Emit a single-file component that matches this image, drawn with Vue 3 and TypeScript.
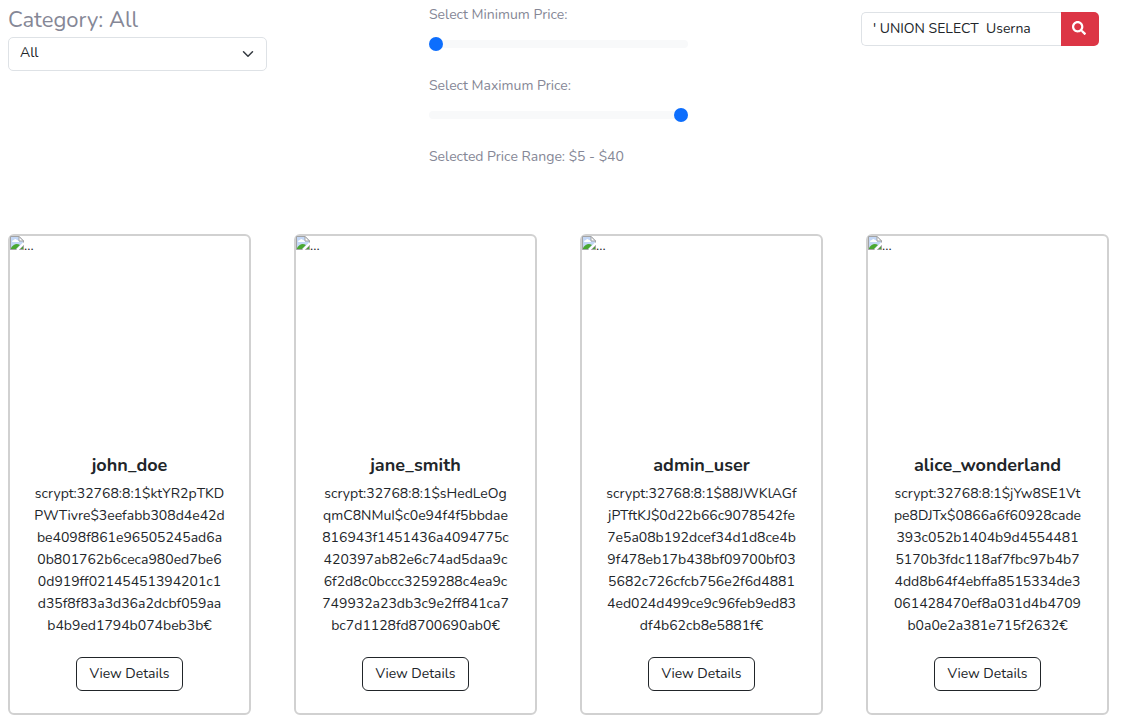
<script setup lang="ts">
import { computed, ref } from 'vue'

interface Product {
  name: string
  lines: string[]
}

const category = ref('All')
const minPrice = ref(5)
const maxPrice = ref(40)
const query = ref("' UNION SELECT  Userna")
const range = computed(() => `$${minPrice.value} - $${maxPrice.value}`)

const products: Product[] = [
  {
    name: 'john_doe',
    lines: [
      'scrypt:32768:8:1$ktYR2pTKD',
      'PWTivre$3eefabb308d4e42d',
      'be4098f861e96505245ad6a',
      '0b801762b6ceca980ed7be6',
      '0d919ff02145451394201c1',
      'd35f8f83a3d36a2dcbf059aa',
      'b4b9ed1794b074beb3b€',
    ],
  },
  {
    name: 'jane_smith',
    lines: [
      'scrypt:32768:8:1$sHedLeOg',
      'qmC8NMuI$c0e94f4f5bbdae',
      '816943f1451436a4094775c',
      '420397ab82e6c74ad5daa9c',
      '6f2d8c0bccc3259288c4ea9c',
      '749932a23db3c9e2ff841ca7',
      'bc7d1128fd8700690ab0€',
    ],
  },
  {
    name: 'admin_user',
    lines: [
      'scrypt:32768:8:1$88JWKlAGf',
      'jPTftKJ$0d22b66c9078542fe',
      '7e5a08b192dcef34d1d8ce4b',
      '9f478eb17b438bf09700bf03',
      '5682c726cfcb756e2f6d4881',
      '4ed024d499ce9c96feb9ed83',
      'df4b62cb8e5881f€',
    ],
  },
  {
    name: 'alice_wonderland',
    lines: [
      'scrypt:32768:8:1$jYw8SE1Vt',
      'pe8DJTx$0866a6f60928cade',
      '393c052b1404b9d4554481',
      '5170b3fdc118af7fbc97b4b7',
      '4dd8b64f4ebffa8515334de3',
      '061428470ef8a031d4b4709',
      'b0a0e2a381e715f2632€',
    ],
  },
]
</script>

<template>
  <main class="page">
    <section class="filters">
      <div>
        <label class="heading" for="category">Category: {{ category }}</label>
        <div class="select-wrap">
          <select id="category" v-model="category" class="control">
            <option>All</option>
          </select>
          <svg class="chevron" viewBox="0 0 16 16" aria-hidden="true">
            <path d="m2 5 6 6 6-6" fill="none" stroke="#343a40" stroke-width="2" stroke-linecap="round" stroke-linejoin="round" />
          </svg>
        </div>
      </div>

      <div class="prices">
        <label for="min">Select Minimum Price:</label>
        <input id="min" v-model.number="minPrice" class="range" type="range" min="5" max="40" />
        <label for="max">Select Maximum Price:</label>
        <input id="max" v-model.number="maxPrice" class="range" type="range" min="5" max="40" />
        <p class="summary">Selected Price Range: {{ range }}</p>
      </div>

      <form class="search" @submit.prevent>
        <input v-model="query" class="control search-input" type="text" aria-label="Search" />
        <button class="search-button" type="submit" aria-label="Submit search">
          <svg viewBox="0 0 512 512" aria-hidden="true">
            <path fill="#fff" d="M505 442.700 405.300 343c-4.500-4.500-10.600-7-17-7H372c27.600-35.300 44-79.700 44-128C416 93.100 322.900 0 208 0S0 93.100 0 208s93.100 208 208 208c48.300 0 92.700-16.400 128-44v16.300c0 6.400 2.500 12.500 7 17l99.700 99.700c9.400 9.400 24.600 9.400 33.900 0l28.300-28.300c9.400-9.400 9.400-24.600.1-34zM208 336c-70.700 0-128-57.200-128-128 0-70.700 57.200-128 128-128 70.700 0 128 57.200 128 128 0 70.700-57.200 128-128 128z" />
          </svg>
        </button>
      </form>
    </section>

    <section class="cards">
      <article v-for="product in products" :key="product.name" class="card">
        <div class="picture">
          <svg class="missing" viewBox="1 1 14 14" aria-hidden="true">
            <path d="M1 1h9l5 5v3L9 15H1z" fill="#c3d7f6" />
            <path d="M2 14v-1q4-6 9-3l-4 4z" fill="#4aa832" />
            <path d="M3 7q0-2 2-2 1-2 3 0 2 0 2 2z" fill="#fff" />
            <path d="M8 14.500H1.500v-13H10l4.500 4.500v2" fill="none" stroke="#a3a3a3" />
            <path d="M10 1.500V6h4.500z" fill="#fff" stroke="#a3a3a3" />
            <path d="M10.500 14.500h4v-4z" fill="#4aa832" stroke="#a3a3a3" />
            <path d="M8 15l7-7" stroke="#fff" stroke-width="2" />
          </svg>
          <span>...</span>
        </div>
        <div class="body">
          <h2 class="name">{{ product.name }}</h2>
          <p class="text">
            <span v-for="line in product.lines" :key="line" class="line">{{ line }}</span>
          </p>
          <button class="details" type="button">View Details</button>
        </div>
      </article>
    </section>
  </main>
</template>

<style>
body {
  background: #fff;
}
</style>

<style scoped>
* {
  box-sizing: border-box;
}

.page {
  font-family: Nunito, Lato, sans-serif;
  font-size: 14px;
  line-height: 22px;
  color: #212529;
  padding-left: 8px;
}

.filters {
  display: grid;
  grid-template-columns: 1fr 1fr 249px;
  column-gap: 162px;
  min-height: 234px;
  padding-right: 46px;
  color: #858796;
}

.heading {
  display: block;
  padding-top: 7px;
  font-size: 22px;
  line-height: 26px;
  margin-bottom: 4px;
}

.select-wrap {
  position: relative;
}

.control {
  display: block;
  width: 100%;
  height: 34px;
  margin: 0;
  padding: 0 11px 2px;
  border: 1px solid #dee2e6;
  border-radius: 5px;
  background: #fff;
  color: #212529;
  font: inherit;
  appearance: none;
  outline: none;
}

.chevron {
  position: absolute;
  top: 11px;
  right: 13px;
  width: 12px;
  height: 12px;
  pointer-events: none;
}

.prices {
  padding-top: 4px;
}

.prices label {
  display: block;
  margin-bottom: 7px;
}

.range {
  display: block;
  width: 100%;
  height: 22px;
  margin: 0 0 20px;
  appearance: none;
  background: transparent;
}

.range::-webkit-slider-runnable-track {
  height: 8px;
  border-radius: 8px;
  background: #f8f9fa;
}

.range::-webkit-slider-thumb {
  appearance: none;
  width: 14px;
  height: 14px;
  margin-top: -3px;
  border-radius: 50%;
  background: #0d6efd;
}

.summary {
  margin: 0;
}

.search {
  display: flex;
  width: 238px;
  margin-top: 12px;
  justify-self: end;
  align-self: start;
}

.search-input {
  flex: 1;
  min-width: 0;
  border-right: 0;
  border-radius: 5px 0 0 5px;
  white-space: pre;
}

.search-button {
  display: flex;
  align-items: center;
  justify-content: center;
  width: 38px;
  height: 34px;
  padding: 0 2px 2px 0;
  border: 0;
  border-radius: 0 5px 5px 0;
  background: #dc3545;
}

.search-button svg {
  width: 14px;
  height: 14px;
}

.cards {
  display: grid;
  grid-template-columns: repeat(4, 1fr);
  column-gap: 43px;
  padding-right: 36px;
}

.card {
  border: 2px solid #d1d1d1;
  border-radius: 6px;
}

.picture {
  display: flex;
  height: 200px;
  line-height: 20px;
}

.missing {
  width: 14px;
  height: 14px;
}

.body {
  padding: 18px 14px 22px;
  text-align: center;
}

.name {
  margin: 0 0 7px;
  font-size: 18px;
  line-height: 22px;
  font-weight: 700;
}

.text {
  margin: 0 0 20px;
}

.line {
  display: block;
}

.details {
  height: 34px;
  padding: 0 12px;
  border: 1px solid #212529;
  border-radius: 6px;
  background: #fff;
  color: #212529;
  font: inherit;
}
</style>
